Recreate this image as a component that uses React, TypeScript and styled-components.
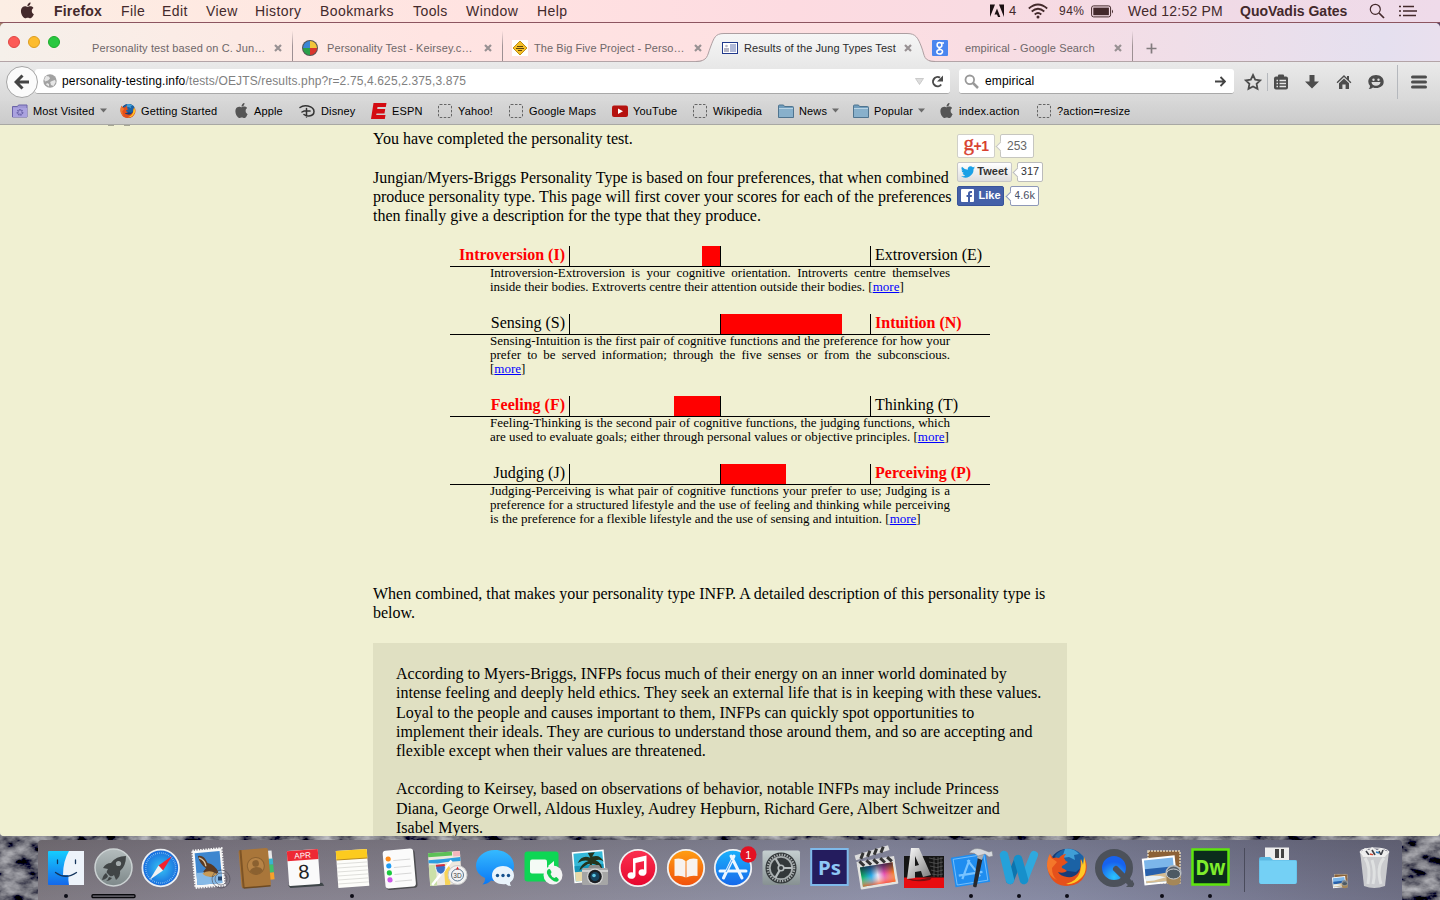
import React from "react";
import styled, { createGlobalStyle } from "styled-components";

const Global = createGlobalStyle`
  * { box-sizing: border-box; }
  body { margin: 0; background: #23252c; overflow: hidden; font-family: "Liberation Sans", Arial, sans-serif; }
  svg { display: block; flex: none; }
`;

const Desktop = styled.div`
  position: relative;
  display: flex;
  flex-direction: column;
  width: 1440px;
  height: 900px;
  overflow: hidden;
  background: linear-gradient(90deg, #a5806a, #5c4668);
`;

/* ---------- menu bar ---------- */
const MenuBar = styled.div`
  position: relative;
  display: flex;
  flex: none;
  align-items: center;
  height: 23px;
  border-bottom: 1px solid #8c5560;
  background: linear-gradient(90deg, #fceee4 0%, #feeae2 12%, #ffe2e1 35%, #fddbe1 55%, #f9dbe2 68%, #f0dae6 85%, #efdbea 100%);
  color: #43292b;
`;
const MenuItem = styled.span<{ $w: number; $bold?: boolean; $size?: number; $ls?: number }>`
  flex: none;
  width: ${(p) => p.$w}px;
  font-size: ${(p) => p.$size ?? 14}px;
  font-weight: ${(p) => (p.$bold ? 700 : 400)};
  letter-spacing: ${(p) => p.$ls ?? (p.$bold ? 0.1 : 0.42)}px;
  line-height: 22px;
  white-space: nowrap;
`;
const Slot = styled.span<{ $w: number }>`
  display: flex;
  flex: none;
  align-items: center;
  width: ${(p) => p.$w}px;
`;

/* ---------- browser ---------- */
const Window = styled.div`
  position: relative;
  z-index: 1;
  display: flex;
  flex: none;
  flex-direction: column;
  height: 813px;
  overflow: hidden;
  border-radius: 5px 5px 4px 4px;
  background: #d2d2d2;
`;
const TabStrip = styled.div`
  display: flex;
  flex: none;
  height: 39px;
  border-bottom: 1px solid #b3a4a7;
  background: linear-gradient(90deg, #f5f0ea 0%, #fbece6 12%, #ffe4e2 30%, #fddfe2 60%, #f9dde3 67%, #f0dee8 82%, #e5e0ef 96%, #e9e0ee 100%);
`;
const Lights = styled.div`
  display: flex;
  flex: none;
  gap: 8px;
  width: 83px;
  padding: 13px 0 0 8px;
`;
const Light = styled.i<{ $c: string; $b: string }>`
  width: 12px;
  height: 12px;
  border: 1px solid ${(p) => p.$b};
  border-radius: 50%;
  background: ${(p) => p.$c};
`;
const Tab = styled.div<{ $active?: boolean; $divider?: boolean; $pad: number }>`
  position: relative;
  display: flex;
  flex: none;
  align-items: center;
  width: ${(p) => (p.$divider ? 210 : 210)}px;
  height: 38px;
  padding: 12px 0 0 ${(p) => p.$pad}px;
  color: ${(p) => (p.$active ? "#2b2b2b" : "#6e6769")};
  background: ${(p) =>
    p.$divider ? "linear-gradient(180deg, rgba(130,110,115,0) 20%, #a09396 60%, #9a8d90) right / 1px 100% no-repeat" : "none"};
`;
const TabShape = styled.svg`
  position: absolute;
  left: -18px;
  top: 10px;
`;
const TabTitle = styled.span<{ $w: number; $ls?: number }>`
  position: relative;
  flex: none;
  width: ${(p) => p.$w}px;
  font-size: 11px;
  letter-spacing: ${(p) => p.$ls ?? 0.1}px;
  line-height: 14px;
  white-space: nowrap;
`;
const TabIcon = styled.span<{ $w: number }>`
  position: relative;
  flex: none;
  width: ${(p) => p.$w}px;
`;

const NavBar = styled.div`
  display: flex;
  flex: none;
  align-items: center;
  height: 39px;
  padding-left: 6px;
  background: linear-gradient(180deg, #eaeaea, #d8d8d8);
`;
const BackButton = styled.div`
  position: relative;
  z-index: 1;
  display: flex;
  align-items: center;
  justify-content: center;
  flex: none;
  width: 32px;
  height: 32px;
  border: 1px solid #a5a5a5;
  border-radius: 50%;
  background: #fbfbfb;
`;
const Field = styled.div<{ $w: number; $ml: number; $pl: number }>`
  display: flex;
  flex: none;
  align-items: center;
  width: ${(p) => p.$w}px;
  height: 25px;
  margin-left: ${(p) => p.$ml}px;
  padding-left: ${(p) => p.$pl}px;
  border-radius: 3px;
  border-bottom: 1px solid #a9a9a9;
  background: #fff;
`;
const FieldText = styled.span<{ $w: number }>`
  flex: none;
  width: ${(p) => p.$w}px;
  font-size: 12px;
  letter-spacing: 0.14px;
  color: #808080;
  white-space: nowrap;
  b { font-weight: 400; color: #000; }
`;
const NavDivider = styled.i<{ $h: number; $ml: number; $mr: number }>`
  width: 1px;
  height: ${(p) => p.$h}px;
  margin: 0 ${(p) => p.$mr}px 0 ${(p) => p.$ml}px;
  background: #b5b8bd;
`;

const Bookmarks = styled.div`
  display: flex;
  flex: none;
  align-items: center;
  height: 24px;
  padding: 0 0 4px 12px;
  border-bottom: 1px solid #a8a8a4;
  background: linear-gradient(180deg, #d7d7d7, #cbcbcb);
`;
const Bookmark = styled.div<{ $w: number }>`
  display: flex;
  flex: none;
  align-items: center;
  gap: 5px;
  width: ${(p) => p.$w}px;
  font-size: 11px;
  letter-spacing: 0.15px;
  line-height: 16px;
  color: #000;
  white-space: nowrap;
`;

/* ---------- page ---------- */
const Page = styled.div`
  flex: 1;
  min-height: 0;
  overflow: hidden;
  background: #f0f0d2;
  color: #000;
  font-family: "Liberation Serif", "Times New Roman", serif;
  font-size: 16px;
  line-height: 19.2px;
`;
const Remnant = styled.div`
  display: flex;
  gap: 10px;
  height: 1px;
  margin-left: 108px;
  i { width: 6px; background: #a6a694; }
`;
const Content = styled.div`
  display: flex;
  flex-direction: column;
  width: 694px;
  margin-left: 373px;
  padding-top: 3.3px;
`;
const Intro = styled.div`
  display: flex;
  height: 116.7px;
`;
const IntroText = styled.div`
  flex: none;
  width: 584px;
  white-space: nowrap;
`;
const Para = styled.p<{ $mb?: number }>`
  margin: 0 0 ${(p) => p.$mb ?? 19.2}px;
  white-space: nowrap;
`;
const Social = styled.div`
  display: flex;
  flex-direction: column;
  align-items: flex-start;
  padding-top: 4.7px;
  font-family: "Liberation Sans", Arial, sans-serif;
`;
const SocialRow = styled.div<{ $mb: number }>`
  display: flex;
  margin-bottom: ${(p) => p.$mb}px;
`;
const SocialButton = styled.div<{ $w: number; $h: number; $bg: string; $line: string; $color: string; $size: number }>`
  display: flex;
  align-items: center;
  justify-content: center;
  gap: 2px;
  width: ${(p) => p.$w}px;
  height: ${(p) => p.$h}px;
  border: 1px solid ${(p) => p.$line};
  border-radius: 2px;
  background: ${(p) => p.$bg};
  color: ${(p) => p.$color};
  font-size: ${(p) => p.$size}px;
  font-weight: 700;
  line-height: 1;
`;
const PlusOne = styled.span`
  display: flex;
  align-items: center;
  letter-spacing: -0.5px;
`;
const PlusG = styled.span`
  margin-top: -5px;
  font-family: "Liberation Serif", serif;
  font-size: 21px;
  font-weight: 400;
  line-height: 16px;
  -webkit-text-stroke: 0.4px currentColor;
`;
const Bubble = styled.div<{ $w: number; $h: number; $ml: number; $color: string; $line: string; $size: number }>`
  position: relative;
  display: flex;
  align-items: center;
  justify-content: center;
  width: ${(p) => p.$w}px;
  height: ${(p) => p.$h}px;
  margin-left: ${(p) => p.$ml}px;
  border: 1px solid ${(p) => p.$line};
  border-radius: 2px;
  background: #fff;
  color: ${(p) => p.$color};
  font-size: ${(p) => p.$size}px;
  line-height: 1;
  &::before {
    content: "";
    position: absolute;
    left: -4px;
    top: calc(50% - 3px);
    width: 6px;
    height: 6px;
    border: solid ${(p) => p.$line};
    border-width: 0 0 1px 1px;
    background: #fff;
    transform: rotate(45deg);
  }
`;

const Scales = styled.div`
  width: 540px;
  height: 338px;
  margin-left: 77px;
`;
const ScaleRow = styled.div`
  display: flex;
  height: 21px;
  border-bottom: 1px solid #000;
`;
const ScaleLabel = styled.div<{ $on: boolean; $right?: boolean }>`
  width: 120px;
  padding: 0 4px;
  border-${(p) => (p.$right ? "left" : "right")}: 1px solid #000;
  text-align: ${(p) => (p.$right ? "left" : "right")};
  color: ${(p) => (p.$on ? "#f00" : "#000")};
  font-weight: ${(p) => (p.$on ? 700 : 400)};
  line-height: 17px;
  white-space: nowrap;
`;
const Half = styled.div<{ $left?: boolean }>`
  display: flex;
  justify-content: ${(p) => (p.$left ? "flex-end" : "flex-start")};
  width: ${(p) => (p.$left ? 151 : 149)}px;
  border-right: ${(p) => (p.$left ? "1px solid #000" : "0")};
`;
const Fill = styled.div<{ $w: number }>`
  width: ${(p) => p.$w}px;
  background: #f00;
`;
const Explain = styled.p`
  width: 460px;
  margin: -1px 0 20px 40px;
  font-size: 13px;
  line-height: 14px;
  text-align: justify;
  a { color: #00f; text-decoration: underline; }
`;
const Description = styled.div`
  height: 300px;
  padding: 21.2px 23px;
  background: #e0e0c2;
`;

/* ---------- dock ---------- */
const Floor = styled.div`
  position: relative;
  flex: 1;
  display: flex;
  padding: 4px 0 0 38px;
`;
const Rock = styled.svg`
  position: absolute;
  left: 0;
  bottom: 0;
`;
const DockBar = styled.div`
  position: relative;
  display: flex;
  width: 1364px;
  height: 60px;
  padding-left: 4px;
  border-radius: 4px 4px 0 0;
  background:
    linear-gradient(180deg, rgba(40,36,48,0.2), rgba(140,140,170,0.12)),
    linear-gradient(90deg, #7d777c 0%, #85808a 12%, #8a8690 32%, #8d8e9f 50%, #8f92a9 62%, #868aa2 75%, #75778e 90%, #6b6c80 100%);
`;
const DockCell = styled.div`
  flex: none;
  width: 47.67px;
  height: 60px;
`;
const DockRule = styled.i`
  flex: none;
  width: 1px;
  height: 44px;
  margin: 8px 10px 0 11px;
  background: #4a4b5c;
`;

/* ---------- small drawings ---------- */
const APPLE =
  "M12.15 6.9c-.95 0-2.42-1.08-3.96-1.04-2.04.03-3.91 1.18-4.96 3.01-2.12 3.68-.55 9.1 1.52 12.09 1.01 1.45 2.21 3.09 3.79 3.04 1.52-.07 2.09-.99 3.94-.99 1.83 0 2.35.99 3.96.95 1.64-.03 2.68-1.48 3.68-2.95 1.16-1.69 1.64-3.33 1.66-3.42-.04-.01-3.18-1.22-3.22-4.86-.03-3.04 2.48-4.49 2.6-4.56-1.43-2.09-3.62-2.32-4.39-2.38-2-.16-3.68 1.09-4.61 1.09zM15.53 3.83c.84-1.01 1.4-2.43 1.25-3.83-1.21.05-2.66.81-3.53 1.82-.78.9-1.45 2.34-1.27 3.71 1.34.1 2.72-.69 3.56-1.7z";
const Apple = ({ size, color }: { size: number; color: string }) => (
  <svg width={size} height={size} viewBox="0 0 24 24"><path d={APPLE} fill={color} /></svg>
);
const Close = () => (
  <svg width="8" height="8" viewBox="0 0 8 8"><path d="M1 1l6 6M7 1L1 7" stroke="#989193" strokeWidth="2.2" /></svg>
);
const Caret = ({ color = "#6b6b6b" }: { color?: string }) => (
  <svg width="7" height="5" viewBox="0 0 7 5"><path d="M0 .5h7L3.500 4.500z" fill={color} /></svg>
);
const Blank = () => (
  <svg width="16" height="16" viewBox="0 0 16 16"><rect x="1.500" y="1.500" width="13" height="13" rx="1.500" fill="none" stroke="#666" strokeDasharray="2.500 1.500" /></svg>
);
const Folder = () => (
  <svg width="16" height="16" viewBox="0 0 16 16">
    <path d="M.5 14.500V3q0-1 1-1h4l1 1.500h8q1 0 1 1v10z" fill="#6f9cbc" stroke="#4f748f" />
    <path d="M1 5.500h14V14H1z" fill="#88b0cb" /><path d="M1 5.500h14" stroke="#b8d3e4" />
  </svg>
);
const FirefoxArt = () => (
  <>
    <circle cx="24" cy="27" r="18" fill="#173c78" />
    <path d="M12 16q8-10 20-6 10 4 10 14l-9 8-16-2z" fill="#1b62a5" />
    <path d="M22 9q9-1 14 5l-5 1 1 5-6-3-7 1z" fill="#3f9ed6" />
    <path d="M7 14q-5 11-1 20 5 12 18 12 13 0 18-11 4-9-1-18 1 6-1 9-1-5-3-7 2 9-2 14-4 5-11 4-7-1-9-5 5 2 9-1-2-2-5-3-1-2 2-3l4-3q-3-1-4-4 0-2 2-4-4 0-7 4-3-1-6 0z" fill="#e5501b" />
    <path d="M41 17q5 15-4 22-6 6-14 5 11-3 14-12 2-7 1-13 1 2 2 6z" fill="#ffc926" />
    <path d="M7 14q1 5 3 5l4 3-5 6q0 8 5 12-9-4-10-14 0-7 3-12z" fill="#f4772a" />
  </>
);

/* ---------- dock icons, each on a 48x60 tile ---------- */
const Finder = (
  <>
    <defs>
      <linearGradient id="fin" x1="0" y1="0" x2="0" y2="1"><stop offset="0" stopColor="#15cdff" /><stop offset="1" stopColor="#1468ea" /></linearGradient>
    </defs>
    <rect x="6" y="11" width="36" height="34" rx="1" fill="url(#fin)" />
    <path d="M27 11h15v34H27q-1-6-.500-10H21q0-14 6-24z" fill="#edf3fa" />
    <path d="M15.500 20v3.500M33.500 20v3.500M13.500 32.500q10 7.500 21 0" fill="none" stroke="#14355d" strokeWidth="1.300" strokeLinecap="round" />
  </>
);
const Launchpad = (
  <>
    <defs><linearGradient id="lp" x1="0" y1="0" x2="0" y2="1"><stop offset="0" stopColor="#b5bdbe" /><stop offset="1" stopColor="#7d8889" /></linearGradient></defs>
    <circle cx="23.500" cy="27.500" r="18.500" fill="url(#lp)" stroke="#ccd2d3" strokeWidth="1.500" />
    <path d="M36 16q-10 0-15 7-5 0-8 5l5 1q-2 3-1 4l3 3q2 1 4-1l2 5q5-4 4-9 6-5 6-15z" fill="#414546" />
    <circle cx="28.500" cy="23.500" r="2.600" fill="#a3abac" />
    <path d="M16 33q-3 2-4 7 5-1 6-4zM19 37q-1 3-3 4 4 0 6-3z" fill="#414546" />
  </>
);
const Safari = (
  <>
    <defs><radialGradient id="saf"><stop offset="0" stopColor="#37c4f5" /><stop offset="1" stopColor="#1668dc" /></radialGradient></defs>
    <circle cx="23.700" cy="28" r="18.300" fill="url(#saf)" stroke="#edf0f3" strokeWidth="1.800" />
    <circle cx="23.700" cy="28" r="15" fill="none" stroke="#9fd2f5" strokeWidth="1.600" strokeDasharray=".6 1.360" />
    <path d="M35 16L21.500 25.500l4.500 5z" fill="#f3212d" /><path d="M12.500 40l9-14.500 4.500 5z" fill="#f2f2f2" />
  </>
);
const Mail = (
  <>
    <g transform="rotate(-5 24 28)">
      <rect x="9" y="9.500" width="29" height="37" fill="#f7f7f7" stroke="#f7f7f7" strokeWidth="2.400" strokeDasharray="1.400 1.200" />
      <rect x="11" y="12" width="25" height="32" fill="#3d86cf" />
      <path d="M11 32h25v12H11z" fill="#86b9e6" />
      <path d="M14 15q6-1 9 8 7 2 10 10l-5 4q-7 0-10-6l3-3q-6-5-7-13z" fill="#5b3a22" />
      <path d="M17 33q5-3 10-1l5 3-6 2q-6 0-9-4z" fill="#c89a55" /><path d="M15 17q6 3 6 9" stroke="#d9c5a5" strokeWidth="1.500" fill="none" />
    </g>
    <g fill="none" stroke="#4b4a55" strokeWidth=".6"><circle cx="36" cy="39" r="9" /><circle cx="36" cy="39" r="6" /></g><rect x="33" y="36.500" width="4" height="4" fill="#26466f" />
  </>
);
const Contacts = (
  <g transform="rotate(-5 22 28)">
    <path d="M36 12h4v9h-4z" fill="#e8e8e8" /><path d="M36 20h4.500v6H36z" fill="#39b5d0" /><path d="M36 26h4.500v8H36z" fill="#3fc16b" /><path d="M36 34h4.500v7H36z" fill="#f5a12c" />
    <rect x="7" y="9" width="29.500" height="38" rx="2" fill="#a9763a" /><path d="M9 9v38" stroke="#7e5425" strokeWidth="2" /><path d="M9 47h27" stroke="#6d4a22" strokeWidth="1.500" />
    <circle cx="23" cy="26" r="8.500" fill="#b68346" stroke="#8b6130" /><circle cx="23" cy="23.500" r="3.300" fill="#8b6130" /><path d="M16.500 31q1-3.500 6.500-4 5.500.5 6.500 4-3 3.500-6.500 3.500t-6.500-3.500z" fill="#8b6130" />
  </g>
);
const Calendar = (
  <g transform="rotate(-4 24 28)">
    <path d="M7 44h34l2 3H9z" fill="#3e4548" />
    <rect x="8" y="10" width="31" height="35" rx="1" fill="#fafafa" /><rect x="8" y="10" width="31" height="10" fill="#ee2934" />
    <text x="23.500" y="18.200" fontSize="8" fill="#fff" textAnchor="middle">APR</text>
    <text x="23.500" y="38.500" fontSize="20" fill="#222" textAnchor="middle">8</text>
  </g>
);
const Notes = (
  <g transform="rotate(-4 24 28)">
    <rect x="9" y="10" width="31" height="37" fill="#fdfdfa" /><rect x="9" y="10" width="31" height="9" fill="#fccb1f" /><path d="M9 19h31" stroke="#b98b1f" />
    <path d="M9 23h31M9 27h31M9 31h31M9 35h31M9 39h31M9 43h31" stroke="#d3d3cf" strokeWidth=".7" />
  </g>
);
const Reminders = (
  <g transform="rotate(-5 24 28)">
    <rect x="9" y="11" width="31" height="38" rx="3" fill="#4c4c50" /><rect x="8" y="9.500" width="30.500" height="38" rx="3" fill="#fbfbfb" />
    <circle cx="13" cy="18" r="2.600" fill="#ff8b17" /><circle cx="13" cy="25" r="2.600" fill="#1d9bf5" /><circle cx="13" cy="32" r="2.600" fill="#19c93e" /><circle cx="13" cy="39" r="2.600" fill="#cc55e8" />
    <path d="M18 20h17M18 27h17M18 34h17M18 41h17" stroke="#cfcfcf" strokeWidth=".8" />
  </g>
);
const Maps = (
  <>
    <g transform="rotate(-4 22 28)">
      <rect x="6" y="12" width="32" height="33" fill="#eee9df" /><path d="M6 12h24v4H6z" fill="#5dc057" /><path d="M31 12h7v5h-7z" fill="#f3b6bd" />
      <path d="M6 19h15l17-1v4H24l-9 1-9-1z" fill="#2e9ee0" /><path d="M6 24h7v21H6z" fill="#cbe0a8" /><path d="M20 24q7 0 8 8l-2 13h-5V32z" fill="#f8d355" />
      <path d="M8 44l21-23" stroke="#fff" strokeWidth="2.500" />
      <path d="M13 24h9q2 8-4.500 10-6-2-4.500-10z" fill="#3970c8" stroke="#fff" strokeWidth=".8" /><path d="M13 25h9" stroke="#d6303c" strokeWidth="2" />
    </g>
    <circle cx="34.500" cy="35" r="9.500" fill="#f3f3f3" stroke="#c9c9c9" /><circle cx="34.500" cy="35" r="6" fill="none" stroke="#5c7790" />
    <text x="34.500" y="37.500" fontSize="6.500" fill="#444" textAnchor="middle">3D</text><path d="M34.500 26.500l1.500 3h-3z" fill="#e02626" />
  </>
);
const Messages = (
  <>
    <defs><linearGradient id="msg" x1="0" y1="0" x2="0" y2="1"><stop offset="0" stopColor="#35baff" /><stop offset="1" stopColor="#0a78f5" /></linearGradient></defs>
    <path d="M24 10c11 0 19 7 19 16s-8 15-18 15q-3 0-5-.500-3 3.500-8.500 4 3-2.500 2.500-6.500Q5 34 5 26c0-9 8-16 19-16z" fill="url(#msg)" />
    <path d="M32 26c6.500 0 11 4 11 9.500 0 3-1.500 5-4 7 0 2 .5 2.500 1 3.500-3 0-4-1-5-2-7 1-14-2-14-8.500C21 30 25.500 26 32 26z" fill="#e9f3fb" />
    <g fill="#16518e"><circle cx="26.500" cy="35.500" r="1.700" /><circle cx="32" cy="35.500" r="1.700" /><circle cx="37.500" cy="35.500" r="1.700" /></g>
  </>
);
const PHONE = "M29 32q2-2 3 0l1 2q0 1-1 2 1 3 4 4 1-1 2-1l2 2q1 1-1 2.500-2.500 1-6-2t-4.500-6q-.5-2 .5-3.500z";
const FaceTime = (
  <>
    <rect x="5.500" y="11.500" width="34" height="30" rx="3" fill="#0ed654" /><rect x="11" y="19.500" width="17" height="14" rx="2" fill="#f4fbf5" /><path d="M29 26l6-5v11z" fill="#f4fbf5" />
    <circle cx="34" cy="35" r="9.500" fill="#f4f4f4" /><path d={PHONE} fill="#10c94c" transform="translate(-.5 -2)" />
  </>
);
const Photos = (
  <>
    <g transform="rotate(-5 22 26)">
      <rect x="7" y="11" width="32" height="31" fill="#fff" /><rect x="8.500" y="12.500" width="29" height="28" fill="#35b9d8" /><path d="M8.500 30h29v10.500h-29z" fill="#e8d9a8" /><path d="M8.500 25h29v6h-29z" fill="#1795b8" />
      <path d="M25 18q-8-4-13 4 7-3 11-1-8 2-10 9 7-6 11-6-1 9-3 17h5q1-8 0-17 6 1 10 7 0-7-6-10 5-1 8 2-3-8-11-6l3-4h-7z" fill="#24331c" />
    </g>
    <rect x="16" y="28" width="26" height="17" rx="1.500" fill="#a6a6a6" /><path d="M22 28l2-3h9l2 3z" fill="#8b8b8b" /><rect x="16" y="30" width="26" height="2" fill="#cfcfcf" />
    <circle cx="29" cy="36.500" r="8" fill="#d4d4d4" /><circle cx="29" cy="36.500" r="6.800" fill="#1b1e22" /><circle cx="29" cy="36.500" r="4.500" fill="#17445f" /><circle cx="28" cy="35.500" r="1.800" fill="#5ecae8" />
  </>
);
const Music = (
  <>
    <defs><linearGradient id="itn" x1="0" y1="0" x2="0" y2="1"><stop offset="0" stopColor="#fb3150" /><stop offset="1" stopColor="#e6062e" /></linearGradient></defs>
    <circle cx="24" cy="28" r="18.200" fill="url(#itn)" stroke="#f1f1f3" strokeWidth="1.800" />
    <path d="M19 18.500l13.500-3v17a4 3.300 0 1 1-2.500-3V21l-8.500 2v12.500a4 3.300 0 1 1-2.500-3z" fill="#fff" />
  </>
);
const Books = (
  <>
    <defs><linearGradient id="bks" x1="0" y1="0" x2="0" y2="1"><stop offset="0" stopColor="#ff9f12" /><stop offset="1" stopColor="#f0500d" /></linearGradient></defs>
    <circle cx="24" cy="28" r="18.200" fill="url(#bks)" stroke="#f1f1f3" strokeWidth="1.800" />
    <path d="M23.500 21q-4-3.500-11-2v17q7-1 11 1.500zM24.500 21q4-3.500 11-2v17q-7-1-11 1.500z" fill="#f7f2ee" />
  </>
);
const AppStore = (
  <>
    <defs><linearGradient id="aps" x1="0" y1="0" x2="0" y2="1"><stop offset="0" stopColor="#1cb1fb" /><stop offset="1" stopColor="#1667ea" /></linearGradient></defs>
    <circle cx="24" cy="28" r="18.200" fill="url(#aps)" stroke="#f1f1f3" strokeWidth="1.800" />
    <path d="M25 16L14.500 38M22 16l11 22M11 31h26" stroke="#eef7ff" strokeWidth="3" fill="none" strokeLinecap="round" /><path d="M17 32l6-12" stroke="#2789ec" strokeWidth=".8" />
    <circle cx="39.300" cy="14.500" r="8.200" fill="#e31123" /><text x="39.300" y="18.500" fontSize="11" fill="#fff" textAnchor="middle">1</text>
  </>
);
const Settings = (
  <>
    <defs><linearGradient id="set" x1="0" y1="0" x2="0" y2="1"><stop offset="0" stopColor="#c5cfd0" /><stop offset="1" stopColor="#879192" /></linearGradient></defs>
    <rect x="5.500" y="10.500" width="37.500" height="34.500" rx="2" fill="url(#set)" /><circle cx="24" cy="28" r="15.500" fill="#33383a" />
    <circle cx="24" cy="28" r="13.200" fill="none" stroke="#aeb3b4" strokeWidth="2.200" strokeDasharray="1.300 1.300" /><circle cx="24" cy="28" r="11.200" fill="none" stroke="#a7adae" strokeWidth="1.800" />
    <path d="M24 28h11M24 28l-5.500-9.500M24 28l-5.500 9.500" stroke="#b5bbbc" strokeWidth="2.200" /><circle cx="24" cy="28" r="2.800" fill="#33383a" stroke="#b5bbbc" strokeWidth="1.600" />
  </>
);
const Photoshop = (
  <>
    <rect x="6.200" y="9" width="36.500" height="36" fill="#241c5e" stroke="#7eb9ea" strokeWidth="2" />
    <text x="13" y="34.500" fontSize="20" fontWeight="700" fill="#8fc8f5" fontFamily="'Noto Sans', 'Liberation Sans', sans-serif" textLength="23" lengthAdjust="spacingAndGlyphs">Ps</text>
  </>
);
const FinalCut = (
  <>
    <defs>
      <linearGradient id="fcp"><stop offset="0" stopColor="#12b05a" /><stop offset=".3" stopColor="#26a8e8" /><stop offset=".5" stopColor="#e9e4f5" /><stop offset=".7" stopColor="#e44fb0" /><stop offset="1" stopColor="#f07a1b" /></linearGradient>
      <linearGradient id="fcd" x1="0" y1="0" x2="0" y2="1"><stop offset=".5" stopColor="#fff" stopOpacity="0" /><stop offset="1" stopColor="#ff5a22" stopOpacity=".8" /></linearGradient>
      <linearGradient id="fct" x1="0" y1="0" x2="0" y2="1"><stop offset="0" stopColor="#141433" stopOpacity=".75" /><stop offset=".5" stopColor="#141433" stopOpacity="0" /></linearGradient>
    </defs>
    <g transform="rotate(-9 24 30)">
      <rect x="6" y="22" width="38" height="25" rx="1" fill="#e4e4e0" /><rect x="8.500" y="25" width="33" height="19.500" fill="url(#fcp)" /><rect x="8.500" y="25" width="33" height="19.500" fill="url(#fcd)" /><rect x="8.500" y="25" width="33" height="19.500" fill="url(#fct)" />
      <rect x="6" y="19" width="38" height="5" fill="#ddd" /><path d="M9 19l4 5M16 19l4 5M23 19l4 5M30 19l4 5M37 19l4 5" stroke="#333" strokeWidth="3" />
    </g>
    <g transform="rotate(-17 5 20)"><rect x="4" y="15" width="35" height="5" fill="#dcdcdc" /><path d="M9 20l4-5M16 20l4-5M23 20l4-5M30 20l4-5" stroke="#333" strokeWidth="3" /></g>
  </>
);
const Autodesk = (
  <>
    <defs><linearGradient id="acd" x1="0" y1="0" x2="1" y2="1"><stop offset="0" stopColor="#fff" /><stop offset="1" stopColor="#777" /></linearGradient></defs>
    <rect x="4" y="16" width="40" height="23" fill="#151515" /><rect x="4" y="37.500" width="40" height="10.500" fill="#e80c0f" />
    <path d="M29 18q8 3 14 0M29 22q8 3 14 0M30 26q7 3 13 0M31 30q6 3 12 0M32 34q6 2 11 0M34 17v20M38 17v20M41 17v20" fill="none" stroke="#6a6a6a" strokeWidth=".6" />
    <path d="M7 37q8 6 26-1l-3 4q-14 3-23-1z" fill="#7c0e10" />
    <path fillRule="evenodd" d="M11 8h8l12 27-8 2-2-6-6 1v6l-8 1zM15 16v10l4-1z" fill="url(#acd)" />
  </>
);
const Xcode = (
  <>
    <g transform="rotate(-9 22 30)">
      <rect x="6" y="15" width="35" height="30" fill="#1f8df0" /><rect x="8" y="17" width="31" height="26" fill="none" stroke="#a5d7ff" strokeWidth=".6" />
      <path d="M24 20L14 38M22 20l10 18M11 34h24" stroke="#79c3ff" strokeWidth="2.200" fill="none" />
    </g>
    <path d="M31 17l-5 29q1 2 3.500 1l6-28z" fill="#27292d" /><path d="M30 18l2-6 5 1-2 7z" fill="#a9adb2" />
    <path d="M22 13q4-6 12-4l8 3 3-1 1 5-4 1-4-3-7 2q-4-4-9-3z" fill="#d5d8dc" stroke="#7d8187" strokeWidth=".5" />
  </>
);
const Word = (
  <>
    <path d="M29 40L39 15" stroke="#2fa9de" strokeWidth="8" strokeLinecap="round" />
    <path d="M15 40l8-20" stroke="#0d74ad" strokeWidth="8" strokeLinecap="round" />
    <path d="M9 15l6 25" stroke="#25a2da" strokeWidth="8.500" strokeLinecap="round" />
    <path d="M23 19l6 21" stroke="#1690cb" strokeWidth="8.500" strokeLinecap="round" />
  </>
);
const QuickTime = (
  <>
    <defs><radialGradient id="qt" cy=".8"><stop offset="0" stopColor="#2cc5fc" /><stop offset="1" stopColor="#1762ee" /></radialGradient></defs>
    <circle cx="24" cy="28" r="15.500" fill="url(#qt)" stroke="#4c515a" strokeWidth="7" /><path d="M26 29l15 15" stroke="#4c515a" strokeWidth="6" strokeLinecap="round" /><path d="M36 47h7v-7z" fill="#4c515a" />
  </>
);
const PreviewArt = () => (
  <>
    <rect x="10" y="11" width="32" height="32" fill="#8c6237" stroke="#e1d4b8" strokeWidth="1.500" strokeDasharray="2 1" />
    <g transform="rotate(-6 20 30)">
      <rect x="5" y="17" width="33" height="27" fill="#fff" /><rect x="7" y="19" width="29" height="23" fill="#7cb6ea" /><path d="M7 28h29v7H7z" fill="#2861ac" /><path d="M7 35l29-2v9H7z" fill="#d6bd92" /><path d="M7 35q12 0 20 3l-12 2H7z" fill="#e9f1f5" />
    </g>
    <circle cx="35.500" cy="33" r="7.300" fill="#57616b" stroke="#b4b9bd" strokeWidth="1.500" /><path d="M28.500 34h14v9q-7 5-14 0z" fill="#a58758" /><ellipse cx="35.500" cy="34" rx="7" ry="5" fill="#4d5963" stroke="#c9cdd0" />
  </>
);
const Dreamweaver = (
  <>
    <rect x="6.500" y="9.500" width="36" height="35" fill="#0b2d1c" stroke="#5ee60c" strokeWidth="2.500" />
    <text x="9.500" y="34.500" fontSize="21" fontWeight="700" fill="#7fee2c" fontFamily="'Noto Sans', 'Liberation Sans', sans-serif" textLength="30" lengthAdjust="spacingAndGlyphs">Dw</text>
  </>
);

const dock: { art: React.ReactNode; run?: "dot" | "bar" }[] = [
  { art: Finder, run: "dot" }, { art: Launchpad, run: "bar" }, { art: Safari }, { art: Mail }, { art: Contacts }, { art: Calendar },
  { art: Notes, run: "dot" }, { art: Reminders }, { art: Maps }, { art: Messages }, { art: FaceTime }, { art: Photos }, { art: Music },
  { art: Books }, { art: AppStore }, { art: Settings }, { art: Photoshop }, { art: FinalCut }, { art: Autodesk },
  { art: Xcode, run: "dot" }, { art: Word, run: "dot" }, { art: <FirefoxArt />, run: "dot" }, { art: QuickTime },
  { art: <PreviewArt />, run: "dot" }, { art: Dreamweaver, run: "dot" },
];

const menus: [string, number][] = [["File", 41], ["Edit", 44], ["View", 49], ["History", 65], ["Bookmarks", 93], ["Tools", 53], ["Window", 71], ["Help", 40]];

const scales = [
  { left: "Introversion (I)", right: "Extroversion (E)", l: 18, r: 0, text: "Introversion-Extroversion is your cognitive orientation. Introverts centre themselves inside their bodies. Extroverts centre their attention outside their bodies." },
  { left: "Sensing (S)", right: "Intuition (N)", l: 0, r: 121, text: "Sensing-Intuition is the first pair of cognitive functions and the preference for how your prefer to be served information; through the five senses or from the subconscious." },
  { left: "Feeling (F)", right: "Thinking (T)", l: 46, r: 0, text: "Feeling-Thinking is the second pair of cognitive functions, the judging functions, which are used to evaluate goals; either through personal values or objective principles." },
  { left: "Judging (J)", right: "Perceiving (P)", l: 0, r: 65, text: "Judging-Perceiving is what pair of cognitive functions your prefer to use; Judging is a preference for a structured lifestyle and the use of feeling and thinking while perceiving is the preference for a flexible lifestyle and the use of sensing and intuition." },
];

const DisneyD = () => (
  <svg width="17" height="16" viewBox="0 0 17 16"><path d="M1 4.500q3-2.500 8-1.500 6 1.500 6 5.500 0 4-5 4.500-3 .2-5-1.500M7.500 5.500V14M3 9q3-2 8-1" fill="none" stroke="#333" strokeWidth="1.500" strokeLinecap="round" /></svg>
);
const YouTube = () => (
  <svg width="16" height="16" viewBox="0 0 16 16"><rect y="2.500" width="16" height="11.500" rx="2" fill="#b5120f" /><path d="M6 5.500l5 2.700-5 2.800z" fill="#fff" /></svg>
);

export default function App() {
  return (
    <Desktop>
      <Global />
      <MenuBar>
        <Slot $w={54}>
          <svg width="54" height="22" viewBox="0 0 54 22"><g transform="translate(19.500 2.500) scale(.66)"><path d={APPLE} fill="#43292b" /></g></svg>
        </Slot>
        <MenuItem $w={67} $bold $ls={0.2}>Firefox</MenuItem>
        {menus.map(([m, w]) => <MenuItem key={m} $w={w}>{m}</MenuItem>)}
        <Slot $w={412} />
        <Slot $w={20}>
          <svg width="16" height="14" viewBox="0 0 16 14"><path d="M1 .5h5L1 13zM15 .5h-5L15 13zM8 4.500l3.300 8.500H9l-1-2.600H5.500z" fill="#1c1013" /></svg>
        </Slot>
        <MenuItem $w={19} $size={13} $ls={0}>4</MenuItem>
        <Slot $w={31}>
          <svg width="20" height="16" viewBox="0 0 20 16"><g fill="none" stroke="#43292b" strokeWidth="1.700"><path d="M.8 5.500q9.200-8 18.400 0M3.700 8.500q6.300-5.500 12.600 0M6.700 11.500q3.300-3 6.600 0" /></g><circle cx="10" cy="14" r="1.500" fill="#43292b" /></svg>
        </Slot>
        <MenuItem $w={32} $size={12} $ls={0.5}>94%</MenuItem>
        <Slot $w={37}>
          <svg width="23" height="13" viewBox="0 0 23 13"><rect x=".6" y=".9" width="19" height="11" rx="2" fill="none" stroke="#43292b" /><rect x="2.300" y="2.600" width="15.600" height="7.600" fill="#43292b" /><path d="M21 4.500q2 2 0 4z" fill="#43292b" /></svg>
        </Slot>
        <MenuItem $w={112} $ls={0.22}>Wed 12:52 PM</MenuItem>
        <MenuItem $w={129} $bold $ls={0}>QuoVadis Gates</MenuItem>
        <Slot $w={30}>
          <svg width="16" height="16" viewBox="0 0 16 16"><circle cx="6.300" cy="6.300" r="5" fill="none" stroke="#43292b" strokeWidth="1.200" /><path d="M10 10l5 5" stroke="#43292b" strokeWidth="1.700" /></svg>
        </Slot>
        <svg width="19" height="12" viewBox="0 0 19 12"><path d="M0 1.500h2M0 6h2M0 10.500h2M4 1.500h11M4 6h14M4 10.500h13" stroke="#43292b" strokeWidth="1.700" /></svg>
      </MenuBar>

      <Window>
        <TabStrip>
          <Lights><Light $c="#fc5b57" $b="#df4744" /><Light $c="#fdbc2e" $b="#dd9d20" /><Light $c="#29c840" $b="#1cac2b" /></Lights>
          <Tab $pad={9} $divider><TabTitle $w={182} $ls={0.12}>Personality test based on C. Jun…</TabTitle><Close /></Tab>
          <Tab $pad={9} $divider>
            <TabIcon $w={25}><svg width="16" height="16" viewBox="0 0 16 16"><circle cx="8" cy="8" r="8" fill="#555" /><path d="M8 8V1a7 7 0 0 0-7 7z" fill="#3b86d4" /><path d="M8 8V1a7 7 0 0 1 7 7z" fill="#f2c53a" /><path d="M8 8H1a7 7 0 0 0 7 7z" fill="#2aa04a" /><path d="M8 8h7a7 7 0 0 1-7 7z" fill="#d9352c" /></svg></TabIcon>
            <TabTitle $w={157} $ls={0.1}>Personality Test - Keirsey.c…</TabTitle><Close />
          </Tab>
          <Tab $pad={9}>
            <TabIcon $w={22}><svg width="16" height="16" viewBox="0 0 16 16"><rect width="16" height="16" fill="#fff" /><path d="M8 1l7 7-7 7-7-7z" fill="#f4bf27" stroke="#c08d14" /><path d="M5 6.500h6M4 8.500h8M6 10.500h4" stroke="#5c450e" /></svg></TabIcon>
            <TabTitle $w={160} $ls={0.07}>The Big Five Project - Perso…</TabTitle><Close />
          </Tab>
          <Tab $pad={9} $active>
            <TabShape width="252" height="29" viewBox="0 0 252 29">
              <defs><linearGradient id="tab" x1="0" y1="0" x2="0" y2="1"><stop offset="0" stopColor="#f6f6f6" /><stop offset="1" stopColor="#eaeaea" /></linearGradient></defs>
              <path d="M1 29C13 28.500 12 23 15.500 14S20 .5 29 .5H212C221 .5 223 5 226.500 14S228 28.500 240 29z" fill="url(#tab)" />
              <path d="M1 28.500C13 28 12 23 15.500 14S20 .5 29 .5H212C221 .5 223 5 226.500 14S228 28 240 28.500" fill="none" stroke="#ac9ea1" />
            </TabShape>
            <TabIcon $w={22}><svg width="16" height="12" viewBox="0 0 16 12"><rect x=".5" y=".5" width="15" height="11" fill="#fff" stroke="#213a8c" /><path d="M8 3h6M8 5h6M8 7h6M8 9h6" stroke="#5164a8" strokeWidth=".9" /><rect x="2" y="6" width="5" height="4" fill="#b5b5c4" /><circle cx="4.500" cy="4" r="1.300" fill="#b5b5c4" /></svg></TabIcon>
            <TabTitle $w={160} $ls={0.08}>Results of the Jung Types Test</TabTitle>
            <TabIcon $w={8}><Close /></TabIcon>
          </Tab>
          <Tab $pad={9} $divider>
            <TabIcon $w={33}><svg width="16" height="16" viewBox="0 0 16 16"><rect width="16" height="16" rx="1" fill="#4b86ef" /><g fill="none" stroke="#fff" strokeWidth="1.500"><circle cx="7.500" cy="5" r="2.400" /><path d="M9 3h3M8 7.500q-2 1 0 1.700 3 1 2.500 2.800-.5 2-3 2t-2.700-2q0-2 3.200-2.500" /></g></svg></TabIcon>
            <TabTitle $w={149}>empirical - Google Search</TabTitle><Close />
          </Tab>
          <Tab $pad={13}><svg width="11" height="11" viewBox="0 0 11 11"><path d="M5.500 .5v10M.5 5.500h10" stroke="#827b7e" strokeWidth="1.700" /></svg></Tab>
        </TabStrip>

        <NavBar>
          <BackButton><svg width="16" height="16" viewBox="0 0 16 16"><path d="M8.500 1.500L2 8l6.500 6.500M2.500 8H15" fill="none" stroke="#444" strokeWidth="3" /></svg></BackButton>
          <Field $w={915} $ml={-3} $pl={8}>
            <Slot $w={19}><svg width="14" height="14" viewBox="0 0 14 14"><circle cx="7" cy="7" r="6.700" fill="#a2a2a2" /><path d="M3 2l3 .500 1 2-2 2-3 1-.8-2zM9 7l3-1 .7 2-2.200 4-2.500-1-.8-3zM4 9l2 1v2.500l-3-2z" fill="#e6e6e6" /></svg></Slot>
            <FieldText $w={853}><b>personality-testing.info</b>/tests/OEJTS/results.php?r=2.75,4.625,2.375,3.875</FieldText>
            <Slot $w={16}><svg width="9" height="7" viewBox="0 0 9 7"><path d="M.5 .5h8l-4 6z" fill="#ddd" stroke="#bbb" strokeWidth=".7" /></svg></Slot>
            <svg width="13" height="13" viewBox="0 0 13 13"><path d="M10.200 9.500A4.600 4.600 0 1 1 9 2.700" fill="none" stroke="#4b4b4b" strokeWidth="2" /><path d="M12 .5v6H6z" fill="#4b4b4b" /></svg>
          </Field>
          <Field $w={275} $ml={9} $pl={5}>
            <Slot $w={21}><svg width="15" height="15" viewBox="0 0 15 15"><circle cx="5.800" cy="5.800" r="4.300" fill="none" stroke="#999" strokeWidth="1.800" /><path d="M9 9l5 5" stroke="#999" strokeWidth="2.500" /></svg></Slot>
            <FieldText $w={230}><b>empirical</b></FieldText>
            <svg width="11" height="11" viewBox="0 0 11 11"><path d="M0 5.500h9M5.500 1l4.500 4.500L5.500 10" fill="none" stroke="#444" strokeWidth="1.900" /></svg>
          </Field>
          <Slot $w={29}>
            <svg width="29" height="18" viewBox="0 0 29 18"><path d="M19 2l2.200 4.600 5 .7-3.600 3.500.9 5-4.500-2.400-4.500 2.400.9-5L11.800 7.300l5-.7z" fill="none" stroke="#4d4d4d" strokeWidth="1.800" /></svg>
          </Slot>
          <NavDivider $h={18} $ml={4} $mr={5} />
          <Slot $w={31}>
            <svg width="16" height="16" viewBox="0 0 16 16"><rect x="1" y="2.500" width="14" height="13" rx="2" fill="#4d4d4d" /><rect x="5" y=".5" width="6" height="4" rx="1" fill="#4d4d4d" /><path d="M3.500 6.500h1.500M3.500 9.500h1.500M3.500 12.500h1.500M6.500 6.500h6.500M6.500 9.500h6.500M6.500 12.500h6.500" stroke="#e4e4e4" strokeWidth="1.500" /></svg>
          </Slot>
          <Slot $w={32}><svg width="16" height="16" viewBox="0 0 16 16"><path d="M5.500 1h5v6.500H15L8 14.500 1 7.500h4.500z" fill="#4d4d4d" /></svg></Slot>
          <Slot $w={32}><svg width="16" height="16" viewBox="0 0 16 16"><path d="M8 1L.6 8.300l.9.900L8 3l6.500 6.200.9-.9L13 6V2h-2v2z" fill="#4d4d4d" /><path d="M8 4.500l5 4.800V15H9.600v-4.500H6.400V15H3V9.300z" fill="#4d4d4d" /></svg></Slot>
          <Slot $w={29}><svg width="16" height="16" viewBox="0 0 16 16"><path d="M8 1c4.500 0 7.700 2.800 7.700 6.700S12.500 14 8 14q-1.500 0-3-.500Q3 15 .7 15q1.500-1.500 1.300-3.300Q.3 10 .3 7.700C.3 3.800 3.500 1 8 1z" fill="#4d4d4d" /><circle cx="5.500" cy="5.700" r="1.200" fill="#ddd" /><circle cx="10.500" cy="5.700" r="1.200" fill="#ddd" /><path d="M3.500 8h9q-.5 3.800-4.500 3.800T3.500 8z" fill="#ddd" /></svg></Slot>
          <NavDivider $h={34} $ml={0} $mr={13} />
          <svg width="16" height="14" viewBox="0 0 16 14"><path d="M1.500 2h13M1.500 7h13M1.500 12h13" stroke="#4d4d4d" strokeWidth="3" strokeLinecap="round" /></svg>
        </NavBar>

        <Bookmarks>
          <Bookmark $w={108}>
            <svg width="16" height="16" viewBox="0 0 16 16"><path d="M.5 14V3.500h5l1-1.500h8.500v12z" fill="#9f97d5" stroke="#6a63a8" /><path d="M1 5h14v9H1z" fill="#aaa2df" /><circle cx="8" cy="9.300" r="2.400" fill="none" stroke="#6a63a8" strokeWidth="2" strokeDasharray="1.300 .6" /></svg>
            Most Visited<Caret />
          </Bookmark>
          <Bookmark $w={114}><svg width="16" height="16" viewBox="3 7 42 41"><FirefoxArt /></svg>Getting Started</Bookmark>
          <Bookmark $w={65}><Apple size={15} color="#555" />Apple</Bookmark>
          <Bookmark $w={72}><DisneyD />Disney</Bookmark>
          <Bookmark $w={66}><svg width="16" height="16" viewBox="0 0 16 16"><path d="M2.500 0h13l-.7 4H6.500L6.200 6h8l-.7 4.500h-8L5.200 12h9.300l-.7 4H0z" fill="#d40b12" /></svg>ESPN</Bookmark>
          <Bookmark $w={71}><Blank />Yahoo!</Bookmark>
          <Bookmark $w={104}><Blank />Google Maps</Bookmark>
          <Bookmark $w={80}><YouTube />YouTube</Bookmark>
          <Bookmark $w={86}><Blank />Wikipedia</Bookmark>
          <Bookmark $w={75}><Folder />News<Caret /></Bookmark>
          <Bookmark $w={86}><Folder />Popular<Caret /></Bookmark>
          <Bookmark $w={97}><Apple size={15} color="#555" />index.action</Bookmark>
          <Bookmark $w={110}><Blank />?action=resize</Bookmark>
        </Bookmarks>

        <Page>
          <Remnant><i /><i /></Remnant>
          <Content>
            <Intro>
              <IntroText>
                <Para>You have completed the personality test.</Para>
                <Para>
                  Jungian/Myers-Briggs Personality Type is based on four preferences, that when combined<br />
                  produce personality type. This page will first cover your scores for each of the preferences<br />
                  then finally give a description for the type that they produce.
                </Para>
              </IntroText>
              <Social>
                <SocialRow $mb={4}>
                  <SocialButton $w={38} $h={24} $bg="#fff" $line="#d0d0c8" $color="#d8412f" $size={14}><PlusOne><PlusG>g</PlusG>+1</PlusOne></SocialButton>
                  <Bubble $w={34} $h={24} $ml={5} $color="#666" $line="#c6c6c0" $size={12}>253</Bubble>
                </SocialRow>
                <SocialRow $mb={4}>
                  <SocialButton $w={55} $h={20} $bg="linear-gradient(#fff,#dedede)" $line="#c8c8c8" $color="#333" $size={11}>
                    <svg width="14" height="12" viewBox="0 0 24 20"><path d="M24 2.400a10 10 0 0 1-2.800.8A5 5 0 0 0 23.300.5a10 10 0 0 1-3.100 1.200A4.900 4.900 0 0 0 11.800 6.200 14 14 0 0 1 1.700 1a4.900 4.900 0 0 0 1.500 6.600 5 5 0 0 1-2.200-.6 4.900 4.900 0 0 0 3.900 4.900 5 5 0 0 1-2.200.1 4.900 4.900 0 0 0 4.600 3.400A10 10 0 0 1 0 17.400 14 14 0 0 0 21.500 4.900 10 10 0 0 0 24 2.400z" fill="#1ba1e6" /></svg>Tweet
                  </SocialButton>
                  <Bubble $w={26} $h={20} $ml={5} $color="#333" $line="#bbb" $size={11}>317</Bubble>
                </SocialRow>
                <SocialRow $mb={0}>
                  <SocialButton $w={47} $h={20} $bg="#4460a8" $line="#39549a" $color="#fff" $size={11}>
                    <svg width="16" height="13" viewBox="0 0 16 13"><rect x="1" width="13" height="13" rx="1" fill="#fff" /><path d="M8 13V8H6.500V6H8V4.500Q8 2 10.500 2H12v2h-1q-1 0-1 1v1h2l-.3 2H10v5z" fill="#4460a8" /></svg>Like
                  </SocialButton>
                  <Bubble $w={29} $h={20} $ml={6} $color="#4b4f63" $line="#8e98b8" $size={11}>4.6k</Bubble>
                </SocialRow>
              </Social>
            </Intro>

            <Scales>
              {scales.map((s) => (
                <div key={s.left}>
                  <ScaleRow>
                    <ScaleLabel $on={s.l > 0}>{s.left}</ScaleLabel>
                    <Half $left><Fill $w={s.l} /></Half>
                    <Half><Fill $w={s.r} /></Half>
                    <ScaleLabel $right $on={s.r > 0}>{s.right}</ScaleLabel>
                  </ScaleRow>
                  <Explain>{s.text} [<a>more</a>]</Explain>
                </div>
              ))}
            </Scales>

            <Para $mb={20.6}>When combined, that makes your personality type INFP. A detailed description of this personality type is<br />below.</Para>
            <Description>
              <Para>
                According to Myers-Briggs, INFPs focus much of their energy on an inner world dominated by<br />
                intense feeling and deeply held ethics. They seek an external life that is in keeping with these values.<br />
                Loyal to the people and causes important to them, INFPs can quickly spot opportunities to<br />
                implement their ideals. They are curious to understand those around them, and so are accepting and<br />
                flexible except when their values are threatened.
              </Para>
              <Para>
                According to Keirsey, based on observations of behavior, notable INFPs may include Princess<br />
                Diana, George Orwell, Aldous Huxley, Audrey Hepburn, Richard Gere, Albert Schweitzer and<br />
                Isabel Myers.
              </Para>
            </Description>
          </Content>
        </Page>
      </Window>

      <Floor>
        <Rock width="1440" height="68" viewBox="0 0 1440 68">
          <filter id="rock" x="0" y="0" width="100%" height="100%">
            <feTurbulence type="fractalNoise" baseFrequency=".05 .08" numOctaves="4" seed="7" />
            <feColorMatrix values=".9 0 0 0 -.29  .9 0 0 0 -.29  .9 0 0 0 -.26  0 0 0 0 1" />
          </filter>
          <rect width="1440" height="68" filter="url(#rock)" />
        </Rock>
        <DockBar>
          {dock.map((d, i) => (
            <DockCell key={i}>
              <svg width="48" height="60" viewBox="0 0 48 60">
                {d.art}
                {d.run === "dot" && <circle cx="24" cy="56" r="2" fill="#0c0c16" />}
                {d.run === "bar" && <rect x="2" y="54.700" width="43" height="2.800" rx="1" fill="#77747e" stroke="#08080c" strokeWidth="1.400" />}
              </svg>
            </DockCell>
          ))}
          <DockRule />
          <DockCell>
            <svg width="48" height="60" viewBox="0 0 48 60">
              <rect x="10" y="7.500" width="24" height="14" fill="#eee" /><path d="M20 9h4v9h-4zM26 9h3v9h-3z" fill="#444" />
              <path d="M4 19q0-2 2-2h9l3 3h22q2 0 2 2v20q0 2-2 2H6q-2 0-2-2z" fill="#5db9e2" /><path d="M4.500 20.500h37V42q0 2-2 2h-33q-2 0-2-2z" fill="#74d0f5" />
            </svg>
          </DockCell>
          <DockCell>
            <svg width="48" height="60" viewBox="0 0 48 60"><g transform="translate(27.500 30) scale(.4)"><PreviewArt /></g></svg>
          </DockCell>
          <DockCell>
            <svg width="48" height="60" viewBox="0 0 48 60">
              <path d="M9 11l4 35q10 4 21 0l4-35z" fill="#d0d1d3" opacity=".95" /><path d="M14 18q6 8 3 26M33 18q-8 9-3 26M21 20q4 12 1 24" stroke="#e8e9ea" strokeWidth="3" fill="none" opacity=".7" />
              <path d="M10 12l4-4 4 2 3-3 5 3 4-2 7 4-3 5H12z" fill="#ededed" /><path d="M15 11l3 4M21 10l3 5M28 11l2 4M32 10l-2 5" stroke="#3b3e46" strokeWidth="1.600" /><path d="M19 14l3 1" stroke="#d2452e" strokeWidth="1.500" /><path d="M25 12l3 1" stroke="#2c7dbf" strokeWidth="1.500" />
              <ellipse cx="23.500" cy="12" rx="14.500" ry="4" fill="none" stroke="#f3f3f3" />
            </svg>
          </DockCell>
        </DockBar>
      </Floor>
    </Desktop>
  );
}
